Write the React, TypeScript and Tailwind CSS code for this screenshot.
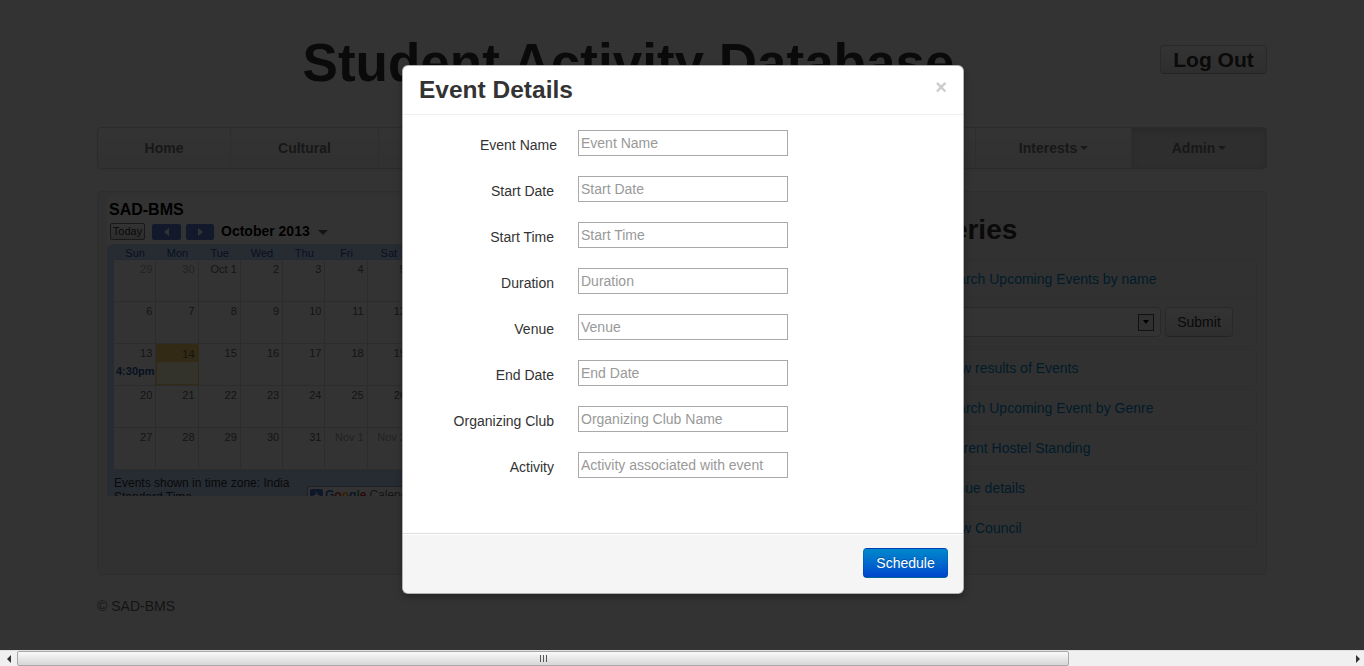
import React from 'react';

const NAV = [
  { label: 'Home', w: 'w-[133px]' },
  { label: 'Cultural', w: 'w-[148px]' },
  { label: 'Sports', w: 'w-[148px]' },
  { label: 'Technical', w: 'w-[149px]' },
  { label: 'Clubs', w: 'w-[150px]' },
  { label: 'Results', w: 'w-[150px]' },
  { label: 'Interests', w: 'w-[156px]', caret: true },
  { label: 'Admin', w: 'flex-1', caret: true, active: true },
];

type Day = { d: string; out?: boolean; today?: boolean; event?: string };

const WEEKS: Day[][] = [
  [{ d: '29', out: true }, { d: '30', out: true }, { d: 'Oct 1' }, { d: '2' }, { d: '3' }, { d: '4' }, { d: '5' }],
  [{ d: '6' }, { d: '7' }, { d: '8' }, { d: '9' }, { d: '10' }, { d: '11' }, { d: '12' }],
  [{ d: '13', event: '4:30pm' }, { d: '14', today: true }, { d: '15' }, { d: '16' }, { d: '17' }, { d: '18' }, { d: '19' }],
  [{ d: '20' }, { d: '21' }, { d: '22' }, { d: '23' }, { d: '24' }, { d: '25' }, { d: '26' }],
  [{ d: '27' }, { d: '28' }, { d: '29' }, { d: '30' }, { d: '31' }, { d: 'Nov 1', out: true }, { d: 'Nov 2', out: true }],
];

const DAYS = ['Sun', 'Mon', 'Tue', 'Wed', 'Thu', 'Fri', 'Sat'];

const FIELDS = [
  ['Event Name', 'Event Name'],
  ['Start Date', 'Start Date'],
  ['Start Time', 'Start Time'],
  ['Duration', 'Duration'],
  ['Venue', 'Venue'],
  ['End Date', 'End Date'],
  ['Organizing Club', 'Organizing Club Name'],
  ['Activity', 'Activity associated with event'],
];

const QUERIES = [
  'View results of Events',
  'Search Upcoming Event by Genre',
  'Current Hostel Standing',
  'Venue details',
  'View Council',
];

function Caret() {
  return <span className="ml-[3px] inline-block h-0 w-0 border-x-[4px] border-t-[4px] border-x-transparent border-t-[#777] align-middle" />;
}

function Calendar() {
  return (
    <div className="h-[300px] w-[305px] shrink-0 overflow-hidden bg-white font-['Liberation_Sans',Arial,sans-serif]">
      <div className="pl-[2px] pt-[4px] text-[16px] font-bold leading-[20px] text-black">SAD-BMS</div>
      <div className="mt-[3px] flex h-[17px] items-center pl-[3px]">
        <div className="flex h-[17px] w-[35px] items-center justify-center rounded-[2px] border border-[#777] bg-gradient-to-b from-white to-[#ddd] text-[11px] text-[#333]">
          Today
        </div>
        <div className="ml-[7px] flex h-[16px] w-[29px] items-center justify-center rounded-[2px] bg-[#5b7fd8]">
          <span className="h-0 w-0 border-y-[4px] border-r-[5px] border-y-transparent border-r-white" />
        </div>
        <div className="ml-[5px] flex h-[16px] w-[28px] items-center justify-center rounded-[2px] bg-[#5b7fd8]">
          <span className="h-0 w-0 border-y-[4px] border-l-[5px] border-y-transparent border-l-white" />
        </div>
        <div className="ml-[7px] text-[14px] font-bold leading-[17px] text-black">October 2013</div>
        <span className="ml-[8px] mt-[2px] h-0 w-0 border-x-[5px] border-t-[5px] border-x-transparent border-t-[#666]" />
      </div>
      <div className="mt-[4px] rounded-tl-[6px] bg-[#c3d9ff] pl-[7px] pt-[3px]">
        <div className="grid w-[296px] grid-cols-7 text-center text-[11px] leading-[12px] text-[#2952a3]">
          {DAYS.map((d) => (
            <div key={d}>{d}</div>
          ))}
        </div>
        <div className="w-[296px] border-t border-[#bbccff] bg-white">
          {WEEKS.map((week, wi) => (
            <div key={wi} className="grid h-[42px] grid-cols-7 border-b border-[#ddd]">
              {week.map((day, di) => (
                <div
                  key={di}
                  className={
                    'flex flex-col border-r border-[#ddd] text-[11px] leading-[15px] ' +
                    (day.today ? 'border border-[#fad163] bg-[#fff7d7]' : '')
                  }
                >
                  <div
                    className={
                      'pr-[3px] pt-[2px] text-right ' +
                      (day.out ? 'text-[#aaa] ' : 'text-[#666] ') +
                      (day.today ? 'bg-[#fad163]' : '')
                    }
                  >
                    {day.d}
                  </div>
                  {day.event && (
                    <div className="pl-[2px] pt-[3px] text-[11px] font-bold text-[#2952a3]">{day.event}</div>
                  )}
                </div>
              ))}
            </div>
          ))}
        </div>
        <div className="flex items-start pb-[10px] pt-[6px]">
          <div className="w-[193px] shrink-0 text-[12px] leading-[14px] text-[#333]">Events shown in time zone: India Standard Time</div>
          <div className="mt-[10px] flex h-[18px] shrink-0 items-center rounded-[3px] border border-[#99b] bg-white pr-[4px] text-[12px]">
            <span className="mx-[2px] flex h-[13px] w-[13px] items-center justify-center rounded-[2px] bg-[#4a7ad6] text-[11px] font-bold leading-none text-white">+</span>
            <span className="font-bold text-[#3366cc]">G</span>
            <span className="font-bold text-[#cc3333]">o</span>
            <span className="font-bold text-[#eeaa00]">o</span>
            <span className="font-bold text-[#3366cc]">g</span>
            <span className="font-bold text-[#339933]">l</span>
            <span className="font-bold text-[#cc3333]">e</span>
            <span className="ml-[3px] text-[#666]">Calendar</span>
          </div>
        </div>
      </div>
    </div>
  );
}

function Queries() {
  return (
    <div className="w-[344px] shrink-0">
      <h2 className="mt-[14px] mb-[10px] text-[28px] font-bold leading-[40px] text-[#333]">Queries</h2>
      <div className="ml-[12px] text-[14px] leading-[20px]">
        <div className="mb-[2px] rounded-[4px] border border-[#e5e5e5]">
          <div className="px-[15px] py-[8px] text-[#0088cc]">Search Upcoming Events by name</div>
          <div className="flex items-center border-t border-[#e5e5e5] px-[15px] py-[9px]">
            <div className="flex h-[30px] w-[220px] items-center justify-end rounded-[4px] border border-[#ccc] bg-white pr-[6px]">
              <div className="flex h-[17px] w-[16px] items-center justify-center border border-[#555] bg-[#eee]">
                <span className="h-0 w-0 border-x-[3px] border-t-[4px] border-x-transparent border-t-black" />
              </div>
            </div>
            <div className="ml-[4px] flex h-[30px] w-[68px] items-center justify-center rounded-[4px] border border-[#ccc] border-b-[#b3b3b3] bg-gradient-to-b from-white to-[#e6e6e6] text-[#333]">
              Submit
            </div>
          </div>
        </div>
        {QUERIES.map((q) => (
          <div key={q} className="mb-[2px] rounded-[4px] border border-[#e5e5e5] px-[15px] py-[8px] text-[#0088cc]">
            {q}
          </div>
        ))}
      </div>
    </div>
  );
}

function Modal() {
  return (
    <div className="absolute left-[402px] top-[65px] w-[562px] rounded-[6px] border border-black/30 bg-white shadow-[0_3px_7px_rgba(0,0,0,0.3)]">
      <div className="flex items-start justify-between border-b border-[#eee] py-[9px] pl-[16px] pr-[15px]">
        <h3 className="text-[24.5px] font-bold leading-[30px] text-[#333]">Event Details</h3>
        <span className="mt-[2px] pr-[1px] text-[20px] font-bold leading-[20px] text-black opacity-20">×</span>
      </div>
      <div className="h-[418px] p-[15px]">
        {FIELDS.map(([label, ph], i) => (
          <div key={label} className="mb-[20px] flex items-start">
            <label className={'w-[139px] pt-[5px] text-right text-[14px] leading-[20px] text-[#333] ' + (i === 0 ? '' : 'pr-[3px]')}>
              {label}
            </label>
            <input
              placeholder={ph}
              className="ml-[21px] h-[26px] w-[210px] border border-[#a9a9a9] px-[2px] text-[14px] text-[#333] outline-none placeholder:text-[#999]"
            />
          </div>
        ))}
      </div>
      <div className="flex justify-end rounded-b-[6px] border-t border-[#ddd] bg-[#f5f5f5] px-[15px] pb-[15px] pt-[14px] shadow-[inset_0_1px_0_#fff]">
        <button className="h-[30px] w-[85px] rounded-[4px] border border-black/10 border-b-black/25 bg-gradient-to-b from-[#0088cc] to-[#0044cc] text-[14px] text-white [text-shadow:0_-1px_0_rgba(0,0,0,0.25)]">
          Schedule
        </button>
      </div>
    </div>
  );
}

function Scrollbar() {
  return (
    <div className="flex h-[16px] items-stretch border-t border-[#e0e0e0] bg-[#f0f0f0]">
      <div className="flex w-[17px] items-center justify-center">
        <span className="h-0 w-0 border-y-[4px] border-r-[4px] border-y-transparent border-r-[#333]" />
      </div>
      <div className="flex w-[1052px] items-center justify-center rounded-[2px] border border-[#a8a8a8] bg-gradient-to-b from-[#fafafa] to-[#d6d6d6]">
        <div className="flex gap-[2px]">
          <span className="h-[7px] w-px bg-[#555]" />
          <span className="h-[7px] w-px bg-[#555]" />
          <span className="h-[7px] w-px bg-[#555]" />
        </div>
      </div>
      <div className="flex flex-1 items-center justify-end pr-[4px]">
        <span className="h-0 w-0 border-y-[4px] border-l-[4px] border-y-transparent border-l-[#333]" />
      </div>
    </div>
  );
}

export default function App() {
  return (
    <div className="h-[666px] w-[1364px] overflow-hidden font-['Liberation_Sans',Arial,sans-serif]">
      <div className="relative h-[650px] overflow-hidden bg-white">
        <div className="mx-auto w-[1170px]">
          <div className="flex h-[127px] items-start justify-between">
            <h1 className="mt-[36px] w-[1063px] text-center text-[53px] font-bold leading-none text-[#333]">
              Student Activity Database
            </h1>
            <div className="mt-[45px] flex h-[29px] w-[107px] items-center justify-center rounded-[4px] border border-[#ccc] border-b-[#b3b3b3] bg-gradient-to-b from-white to-[#e6e6e6] text-[21px] font-bold leading-[27px] text-[#333]">
              Log Out
            </div>
          </div>

          <div className="flex h-[42px] overflow-hidden rounded-[4px] border border-[#d4d4d4] bg-gradient-to-b from-white to-[#f2f2f2] shadow-[0_1px_4px_rgba(0,0,0,0.065)]">
            {NAV.map((n, i) => (
              <div
                key={n.label}
                className={
                  n.w +
                  ' flex items-center justify-center text-[14px] font-bold text-[#777] ' +
                  (i < NAV.length - 1 ? 'border-r border-[#e5e5e5] ' : '') +
                  (n.active ? 'bg-[#e5e5e5] text-[#555] shadow-[inset_0_3px_8px_rgba(0,0,0,0.125)]' : '')
                }
              >
                {n.label}
                {n.caret && <Caret />}
              </div>
            ))}
          </div>

          <div className="mt-[22px] flex h-[384px] justify-between rounded-[4px] border border-[#e3e3e3] bg-[#f5f5f5] pl-[9px] pr-[9px] pt-[4px]">
            <Calendar />
            <Queries />
          </div>

          <div className="mt-[21px] text-[14px] leading-[20px] text-[#666]">© SAD-BMS</div>
        </div>

        <div className="absolute inset-0 bg-black/80" />
        <Modal />
      </div>
      <Scrollbar />
    </div>
  );
}
